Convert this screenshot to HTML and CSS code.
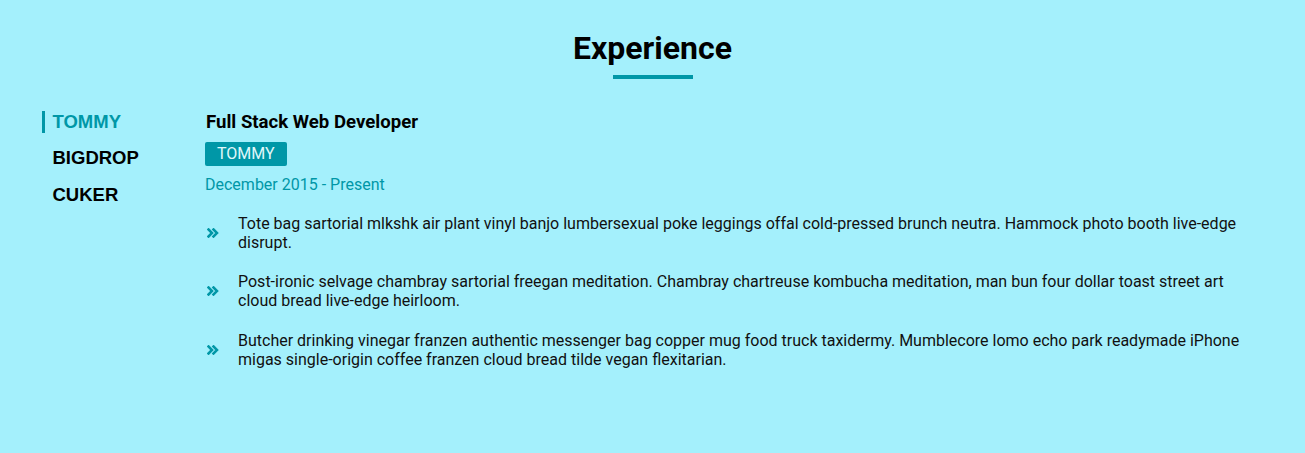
FILE: index.html
```html
<!DOCTYPE html>
<html lang="en">
<head>
<meta charset="utf-8">
<title>Experience</title>
<link rel="stylesheet" href="styles.css">
</head>
<body>
<section class="experience">
  <h2 class="section-title">Experience</h2>
  <div class="title-bar"></div>
  <div class="exp-body">
    <ul class="tabs">
      <li class="tab active">TOMMY</li>
      <li class="tab">BIGDROP</li>
      <li class="tab">CUKER</li>
    </ul>
    <div class="job">
      <h3 class="job-title">Full Stack Web Developer</h3>
      <span class="company">TOMMY</span>
      <p class="dates">December 2015 - Present</p>
      <ul class="duties">
        <li class="duty">
          <span class="duty-icon"><svg viewBox="0 0 12 10" width="12" height="10"><path d="M1.5 1.5 L5 5 L1.5 8.5 M6.5 1.5 L10 5 L6.5 8.5" fill="none" stroke="#0097a7" stroke-width="2.5" stroke-linecap="square" stroke-linejoin="miter"/></svg></span>
          <p class="duty-text">Tote bag sartorial mlkshk air plant vinyl banjo lumbersexual poke leggings offal cold-pressed brunch neutra. Hammock photo booth live-edge disrupt.</p>
        </li>
        <li class="duty">
          <span class="duty-icon"><svg viewBox="0 0 12 10" width="12" height="10"><path d="M1.5 1.5 L5 5 L1.5 8.5 M6.5 1.5 L10 5 L6.5 8.5" fill="none" stroke="#0097a7" stroke-width="2.5" stroke-linecap="square" stroke-linejoin="miter"/></svg></span>
          <p class="duty-text">Post-ironic selvage chambray sartorial freegan meditation. Chambray chartreuse kombucha meditation, man bun four dollar toast street art cloud bread live-edge heirloom.</p>
        </li>
        <li class="duty">
          <span class="duty-icon"><svg viewBox="0 0 12 10" width="12" height="10"><path d="M1.5 1.5 L5 5 L1.5 8.5 M6.5 1.5 L10 5 L6.5 8.5" fill="none" stroke="#0097a7" stroke-width="2.5" stroke-linecap="square" stroke-linejoin="miter"/></svg></span>
          <p class="duty-text">Butcher drinking vinegar franzen authentic messenger bag copper mug food truck taxidermy. Mumblecore lomo echo park readymade iPhone migas single-origin coffee franzen cloud bread tilde vegan flexitarian.</p>
        </li>
      </ul>
    </div>
  </div>
</section>
</body>
</html>
```

FILE: styles.css
```css
html, body {
  margin: 0;
  padding: 0;
  background: #a4f0fc;
}
body {
  font-family: Roboto, "Liberation Sans", sans-serif;
  color: #111;
  height: 453px;
}
.experience {
  padding-top: 28.5px;
}
.section-title {
  margin: 0;
  text-align: center;
  font-family: Roboto, sans-serif;
  font-weight: 700;
  font-size: 32px;
  line-height: 38.4px;
  color: #000;
}
.title-bar {
  width: 80px;
  height: 4px;
  background: #0097a7;
  margin: 8px auto 0;
}
.exp-body {
  display: flex;
  padding: 0 55px 0 42px;
  margin-top: 32px;
}
.tabs {
  list-style: none;
  margin: 0;
  padding: 0;
  width: 163px;
  flex-shrink: 0;
  display: flex;
  flex-direction: column;
  gap: 14.5px;
}
.tab {
  font-family: "Liberation Sans", Arial, sans-serif;
  font-weight: 700;
  font-size: 18.5px;
  line-height: 22px;
  color: #000;
  border-left: 3px solid transparent;
  padding-left: 7.5px;
}
.tab.active {
  color: #0097a7;
  border-left-color: #0097a7;
}
.job {
  flex: 1;
  display: flex;
  flex-direction: column;
  align-items: flex-start;
}
.job-title {
  margin: 1.5px 0 0 1px;
  font-size: 18.6px;
  line-height: 21.6px;
  font-weight: 700;
  color: #000;
}
.company {
  display: inline-block;
  margin-top: 8px;
  background: #0097a7;
  color: #e0f7fa;
  font-size: 16px;
  line-height: 24px;
  padding: 0 12px;
  border-radius: 2px;
}
.dates {
  margin: 7px 0 0;
  font-size: 16px;
  line-height: 24px;
  color: #0097a7;
}
.duties {
  list-style: none;
  margin: 16.5px 0 0;
  padding: 0;
  display: flex;
  flex-direction: column;
  gap: 20.5px;
}
.duty {
  display: flex;
  align-items: center;
}
.duty-icon {
  width: 31px;
  padding-left: 2px;
  flex-shrink: 0;
  display: flex;
  align-items: center;
}
.duty-icon svg {
  display: block;
}
.duty-text {
  margin: 0;
  font-size: 16px;
  line-height: normal;
  color: #111;
}
```
